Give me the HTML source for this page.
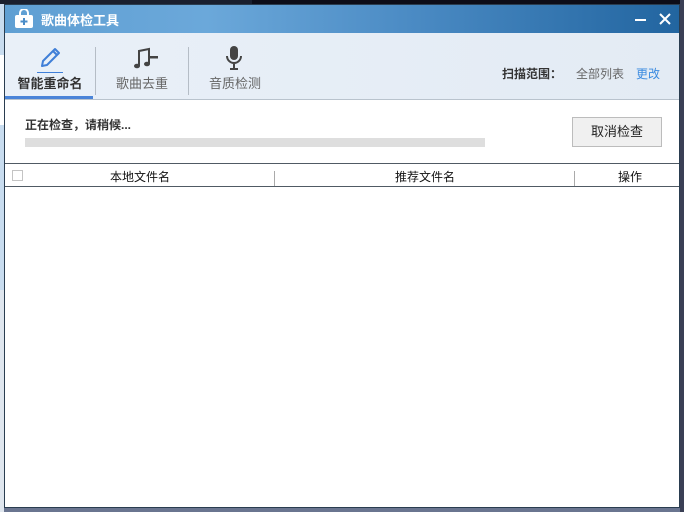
<!DOCTYPE html>
<html><head><meta charset="utf-8"><style>
*{margin:0;padding:0;box-sizing:border-box}
body{width:684px;height:512px;overflow:hidden;position:relative;background:#c8dcef;font-family:"Liberation Sans","Noto Sans CJK SC","WenQuanYi Zen Hei",sans-serif}
.abs{position:absolute}
.win{left:4px;top:4px;width:676px;height:504px;border:1px solid #2a3d50;background:#fff}
.title{left:0;top:0;width:674px;height:28px;background:linear-gradient(90deg,#5f9fd3 0%,#6ba8da 30%,#4b8bc4 60%,#2265a0 100%)}
.tb{left:0;top:28px;width:674px;height:67px;background:linear-gradient(90deg,#e9f0f8,#e3ebf4);border-bottom:1px solid #b9c3cd}
.lbl{font-size:13px;color:#666;text-align:center;width:92px}
.sep{width:1px;height:48px;background:#b5bdc6;top:14px}
</style></head><body>
<div class="abs" style="left:0;top:0;width:684px;height:4px;background:#1a1f2e"></div>
<div class="abs" style="left:252px;top:0;width:432px;height:4px;background:#0d0d18"></div>
<div class="abs" style="left:680px;top:0;width:4px;height:512px;background:#3a3f55"></div>
<div class="abs" style="left:0;top:55px;width:4px;height:70px;background:#fff"></div>
<div class="abs" style="left:0;top:290px;width:4px;height:222px;background:#dfe6ee"></div>
<div class="abs" style="left:4px;top:508px;width:676px;height:4px;background:#6a7590"></div>
<div class="abs win">
 <div class="abs title">
  <svg class="abs" style="left:8px;top:4px" width="22" height="20" viewBox="0 0 22 20"><path d="M7 6V4a4 4 0 0 1 8 0v2" stroke="#fff" stroke-width="2" fill="none"/><rect x="2" y="6" width="18" height="13" rx="2" fill="#fff"/><path d="M11 9v7M7.5 12.5h7" stroke="#4a8cc8" stroke-width="2"/></svg>
  <div class="abs" style="left:36px;top:5px;color:#fff;font-size:13px;font-weight:bold">歌曲体检工具</div>
  <div class="abs" style="left:630px;top:14px;width:11px;height:2px;background:#fff"></div>
  <svg class="abs" style="left:654px;top:8px" width="12" height="12"><path d="M1 1L11 11M11 1L1 11" stroke="#fff" stroke-width="2"/></svg>
 </div>
 <div class="abs tb">
  <svg class="abs" style="left:33px;top:13px" width="24" height="24" viewBox="0 0 24 24"><path d="M4 20l1-5L17 3l4 4L9 19z" fill="none" stroke="#3f7fd8" stroke-width="2" stroke-linejoin="round"/><path d="M15 5l4 4" stroke="#3f7fd8" stroke-width="2"/></svg>
  <div class="abs" style="left:32px;top:39px;width:26px;height:1px;background:#3f7fd8"></div>
  <div class="abs lbl" style="left:0;top:40px;color:#333;font-weight:bold;width:90px">智能重命名</div>
  <div class="abs" style="left:0;top:63px;width:88px;height:3px;background:#4a84d8"></div>
  <div class="abs sep" style="left:90px"></div>
  <svg class="abs" style="left:128px;top:14px" width="26" height="24" viewBox="0 0 26 24"><path d="M6 19V4l10-2v15" stroke="#444" stroke-width="2" fill="none"/><ellipse cx="4" cy="19" rx="3" ry="2.3" fill="#444"/><ellipse cx="14" cy="17" rx="3" ry="2.3" fill="#444"/><rect x="17" y="9" width="8" height="2.5" fill="#444"/></svg>
  <div class="abs lbl" style="left:91px;top:40px">歌曲去重</div>
  <div class="abs sep" style="left:183px"></div>
  <svg class="abs" style="left:220px;top:12px" width="18" height="26" viewBox="0 0 18 26"><rect x="5" y="1" width="8" height="14" rx="4" fill="#444"/><path d="M2 11a7 7 0 0 0 14 0M9 18v5M5 24h8" stroke="#444" stroke-width="2" fill="none"/></svg>
  <div class="abs lbl" style="left:184px;top:40px">音质检测</div>
  <div class="abs" style="left:497px;top:32px;font-size:12px;font-weight:bold;color:#333">扫描范围：</div>
  <div class="abs" style="left:571px;top:32px;font-size:12px;color:#666">全部列表</div>
  <div class="abs" style="left:631px;top:32px;font-size:12px;color:#3b8be0">更改</div>
 </div>
 <div class="abs" style="left:20px;top:111px;font-size:12px;font-weight:bold;color:#333">正在检查，请稍候...</div>
 <div class="abs" style="left:20px;top:133px;width:460px;height:9px;background:#dedede"></div>
 <div class="abs" style="left:567px;top:112px;width:90px;height:30px;background:#f0f0f0;border:1px solid #bcbcbc;font-size:13px;color:#222;text-align:center;line-height:28px">取消检查</div>
 <div class="abs" style="left:0;top:158px;width:674px;height:24px;border-top:1px solid #505a64;border-bottom:1px solid #505a64"></div>
 <div class="abs" style="left:7px;top:165px;width:11px;height:11px;border:1px solid #c4c4c4"></div>
 <div class="abs" style="left:269px;top:166px;width:1px;height:15px;background:#aaa"></div>
 <div class="abs" style="left:569px;top:166px;width:1px;height:15px;background:#aaa"></div>
 <div class="abs" style="left:85px;top:163px;width:100px;text-align:center;font-size:12px;color:#111">本地文件名</div>
 <div class="abs" style="left:370px;top:163px;width:100px;text-align:center;font-size:12px;color:#111">推荐文件名</div>
 <div class="abs" style="left:595px;top:163px;width:60px;text-align:center;font-size:12px;color:#111">操作</div>
</div>
</body></html>
